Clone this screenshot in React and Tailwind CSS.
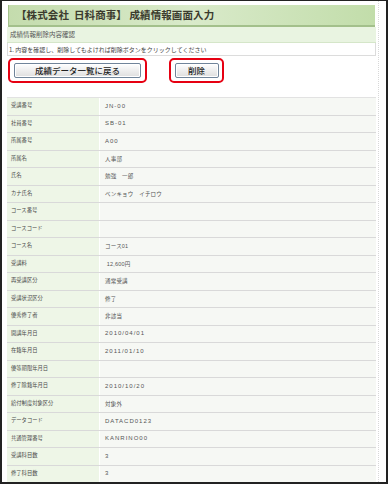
import React from 'react';

const rows = [
  ['受講番号', 'JN-00'],
  ['社員番号', 'SB-01'],
  ['所属番号', 'A00'],
  ['所属名', '人事部'],
  ['氏名', '勉強　一郎'],
  ['カナ氏名', 'ベンキョウ　イチロウ'],
  ['コース番号', ''],
  ['コースコード', ''],
  ['コース名', 'コース01'],
  ['受講料', ' 12,600円'],
  ['再受講区分', '通常受講'],
  ['受講状況区分', '修了'],
  ['優秀修了者', '非該当'],
  ['開講年月日', '2010/04/01'],
  ['在籍年月日', '2011/01/10'],
  ['優等期限年月日', ''],
  ['修了除籍年月日', '2010/10/20'],
  ['給付制度対象区分', '対象外'],
  ['データコード', 'DATACD0123'],
  ['共通管理番号', 'KANRINO00'],
  ['受講科目数', '3'],
  ['修了科目数', '3'],
];

const jp = { fontFamily: '"Noto Sans CJK JP", sans-serif' };
const val = { fontFamily: '"Liberation Sans", "Noto Sans CJK JP", sans-serif' };

// values with kana/kanji render narrower than the ascii ones
const hasJp = (s) => /[\u3000-\u9fff]/.test(s);

function Button({ children, wide }) {
  return (
    <div className={`border-2 border-[#e60012] rounded-[5px] h-[25px] flex items-center justify-center ${wide ? 'w-[139px]' : 'w-[55px]'}`}>
      <div
        className={`h-[15px] flex items-center justify-center rounded-[2px] border border-[#70849a] bg-gradient-to-b from-white to-[#dedede] shadow-[inset_0_0_0_1px_#ffffff] text-[8.5px] font-medium text-[#222] ${wide ? 'w-[127px]' : 'w-[44px]'}`}
        style={jp}
      >
        {children}
      </div>
    </div>
  );
}

export default function App() {
  return (
    <div className="w-[389px] h-[484px] bg-white overflow-hidden">
      <div className="w-[388px] h-[484px] border-x-2 border-b-2 border-t border-[#222] overflow-hidden">
        <div className="ml-[5px] w-[372px] h-full pt-[4px] border-r border-dotted border-[#d8d8d8]">
          {/* title bar */}
          <div className="ml-[1px] w-[367px] h-[22px] flex items-center pl-[7px] border-b-2 border-l border-[#a3c08b] bg-gradient-to-r from-[#c4dcad] via-[#d9eaca] to-[#c2ddaa]">
            <span className="text-[10.5px] font-bold text-[#3b3b2e] tracking-[0.1px]" style={jp}>
              【株式会社&nbsp;&nbsp;日科商事】&nbsp;成績情報画面入力
            </span>
          </div>

          {/* section */}
          <div className="w-[369px] h-[16px] flex items-center pl-[3px] bg-[#e9f4e1] border-b border-[#d5e6c9]">
            <span className="text-[6.5px] text-[#555]" style={jp}>成績情報削除内容確認</span>
          </div>
          <div className="w-[369px] h-[13px] flex items-center pl-[1px] bg-white border border-t-0 border-[#dcdcdc]">
            <span className="text-[6px] text-[#444]" style={jp}>
              1. 内容を確認し、削除してもよければ削除ボタンをクリックしてください
            </span>
          </div>

          {/* buttons */}
          <div className="flex items-center gap-[22px] pl-[1px] pt-[2px]">
            <Button wide>成績データ一覧に戻る</Button>
            <Button>削除</Button>
          </div>

          {/* detail table */}
          <div className="mt-[14px] w-[369px] border-t border-[#e2e2e2]">
            {rows.map(([label, value]) => (
              <div key={label} className="flex h-[17.5px] border-b border-[#d9d9d9]">
                <div className="w-[92px] shrink-0 flex items-center pl-[4px] bg-[#eef6e7] text-[5.3px] text-[#4a4a4a]" style={jp}>
                  {label}
                </div>
                <div
                  className={`flex-1 flex items-center pl-[5px] bg-[#f6f8f4] border-l border-white text-[#555] whitespace-pre ${hasJp(value) ? 'text-[5.5px] tracking-[0.2px]' : 'text-[6px] tracking-[1px]'}`}
                  style={val}
                >
                  {value}
                </div>
              </div>
            ))}
          </div>
        </div>
      </div>
    </div>
  );
}
